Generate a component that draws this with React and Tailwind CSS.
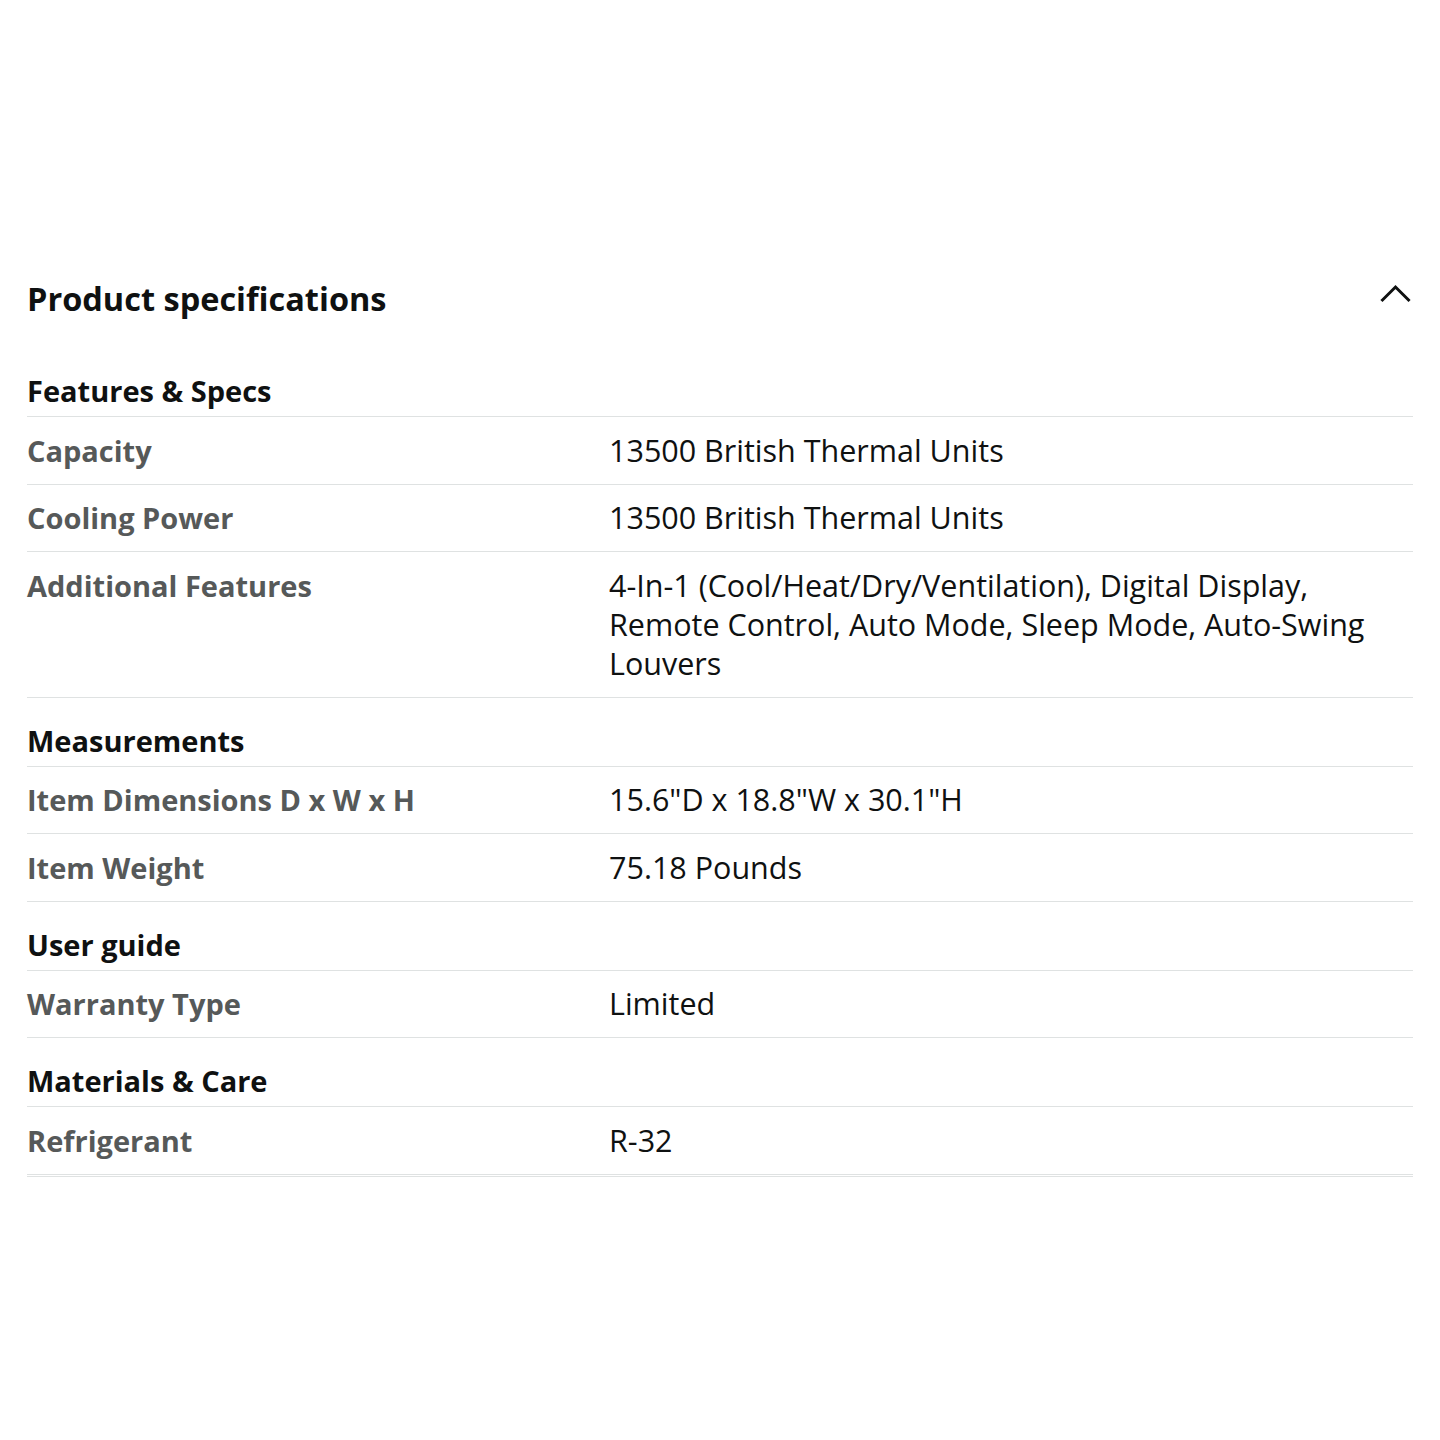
import React from 'react'

const sections = [
    {
        title: 'Features & Specs',
        rows: [
            ['Capacity', '13500 British Thermal Units'],
            ['Cooling Power', '13500 British Thermal Units'],
            ['Additional Features', '4-In-1 (Cool/Heat/Dry/Ventilation), Digital Display, Remote Control, Auto Mode, Sleep Mode, Auto-Swing Louvers'],
        ],
    },
    {
        title: 'Measurements',
        rows: [
            ['Item Dimensions D x W x H', '15.6"D x 18.8"W x 30.1"H'],
            ['Item Weight', '75.18 Pounds'],
        ],
    },
    {
        title: 'User guide',
        rows: [['Warranty Type', 'Limited']],
    },
    {
        title: 'Materials & Care',
        rows: [['Refrigerant', 'R-32']],
    },
]

function Section({ title, rows, first }) {
    return (
        <div>
            <div className={first ? 'pt-[20px] pb-[6px] border-b border-[#dfe2e2]' : 'pt-[23px] pb-[6px] border-b border-[#dfe2e2]'}>
                <h3 className="text-[29px] leading-[39px] font-bold text-[#0f1111]">{title}</h3>
            </div>
            {rows.map(([label, value]) => (
                <div key={label} className="grid grid-cols-[582px_1fr] py-[13.75px] border-b border-[#dfe2e2]">
                    <div className="text-[29px] leading-[39px] font-bold text-[#565959]">{label}</div>
                    <div className="text-[30.5px] leading-[39px] text-[#0f1111]">{value}</div>
                </div>
            ))}
        </div>
    )
}

export default function App() {
    return (
        <div className="min-h-screen bg-white font-['Open_Sans',sans-serif] px-[27px] pt-[272px]">
            <div className="flex items-center justify-between">
                <h2 className="text-[32.5px] leading-[54px] font-bold text-[#0f1111]">Product specifications</h2>
                <svg className="w-[32px] h-[20px] mr-[1px] mb-[10px]" viewBox="0 0 32 20" fill="none">
                    <polyline points="2.5,16 15.5,3 28.5,16" stroke="#0f1111" strokeWidth="3" strokeLinecap="square" />
                </svg>
            </div>
            <div className="mt-[25px]">
                {sections.map((s, i) => (
                    <Section key={s.title} {...s} first={i === 0} />
                ))}
                <div className="h-[2px] border-b border-[#dfe2e2]"></div>
            </div>
        </div>
    )
}
